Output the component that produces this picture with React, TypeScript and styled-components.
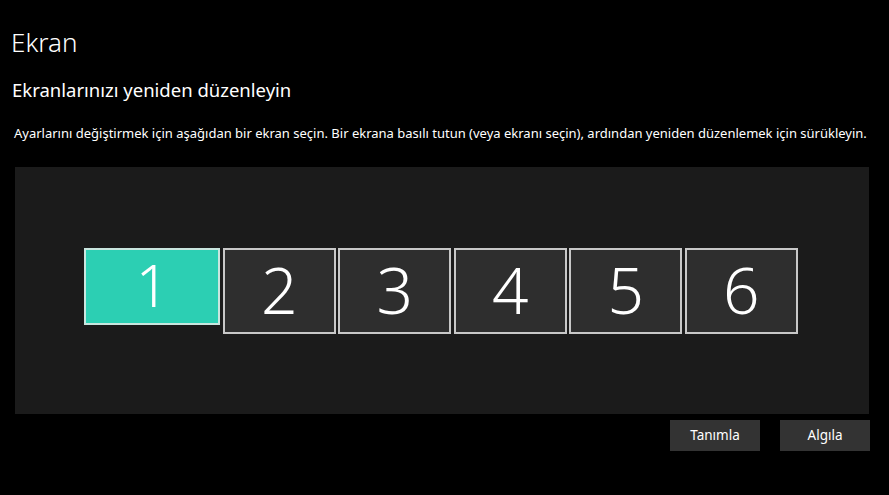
import React from "react";
import styled, { createGlobalStyle } from "styled-components";

const GlobalStyle = createGlobalStyle`
  html, body {
    margin: 0;
    padding: 0;
    background: #000;
  }
  body {
    font-family: "Noto Sans", "Open Sans", sans-serif;
    color: #fff;
  }
`;

const screens = [
  { id: 1, active: true },
  { id: 2 },
  { id: 3 },
  { id: 4 },
  { id: 5 },
  { id: 6 },
];

const App = () => {
  return (
    <Page>
      <GlobalStyle />
      <Title>Ekran</Title>
      <Subtitle>Ekranlarınızı yeniden düzenleyin</Subtitle>
      <Description>
        Ayarlarını değiştirmek için aşağıdan bir ekran seçin. Bir ekrana basılı tutun (veya ekranı seçin),
        ardından yeniden düzenlemek için sürükleyin.
      </Description>
      <Canvas>
        <MonitorRow>
          {screens.map((s) => (
            <Monitor key={s.id} active={!!s.active}>
              {s.id}
            </Monitor>
          ))}
        </MonitorRow>
      </Canvas>
      <Actions>
        <ActionButton>Tanımla</ActionButton>
        <ActionButton>Algıla</ActionButton>
      </Actions>
    </Page>
  );
};

export default App;

const Page = styled.div`
  width: 889px;
  height: 495px;
  background: #000;
  padding: 22px 0 0 0;
  box-sizing: border-box;
`;

const Title = styled.h1`
  margin: 0 0 0 11px;
  font-size: 26px;
  font-weight: 300;
  line-height: 40px;
`;

const Subtitle = styled.h2`
  margin: 15px 0 0 12px;
  font-size: 18.5px;
  font-weight: 400;
  line-height: 26px;
`;

const Description = styled.p`
  margin: 21px 0 0 14px;
  font-size: 13px;
  line-height: 18px;
  white-space: nowrap;
`;

const Canvas = styled.div`
  margin: 25px 0 0 15px;
  width: 854px;
  height: 247px;
  background: #1b1b1b;
  display: flex;
  justify-content: center;
  align-items: center;
`;

const MonitorRow = styled.div`
  display: flex;
  align-items: flex-start;
  gap: 2.5px;
  margin-left: -2px;
`;

const Monitor = styled.div<{ active: boolean }>`
  box-sizing: border-box;
  width: ${(p) => (p.active ? "136px" : "113px")};
  height: ${(p) => (p.active ? "77px" : "86px")};
  background: ${(p) => (p.active ? "#2ccfb3" : "#2e2e2e")};
  border: 2px solid ${(p) => (p.active ? "#c9e6df" : "#c8c8c8")};
  display: flex;
  justify-content: center;
  align-items: center;
  font-size: ${(p) => (p.active ? "58px" : "64px")};
  font-weight: 300;
  color: #fff;
  line-height: 1;
  padding-bottom: 2px;
`;

const Actions = styled.div`
  display: flex;
  justify-content: flex-end;
  gap: 20px;
  margin: 6px 19px 0 0;
`;

const ActionButton = styled.button`
  width: 90px;
  height: 31px;
  border: none;
  background: #333;
  color: #fff;
  font-family: "Noto Sans", "Open Sans", sans-serif;
  font-size: 13.5px;
  padding: 0 0 2px;
`;
